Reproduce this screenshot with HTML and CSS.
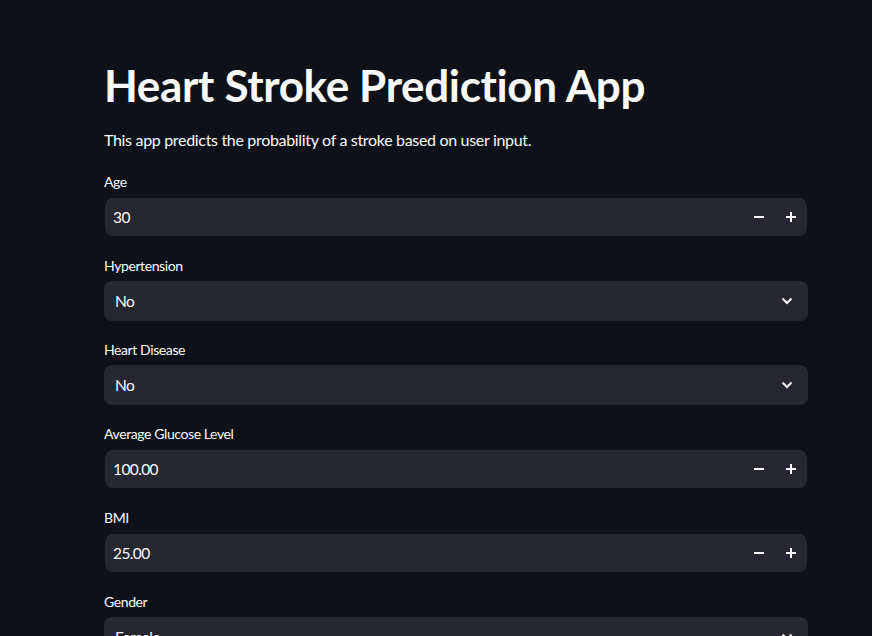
FILE: index.html
```html
<!DOCTYPE html>
<html>
<head>
<meta charset="utf-8">
<link rel="stylesheet" href="styles.css">
</head>
<body>
<main class="main">
  <h1 class="title">Heart Stroke Prediction App</h1>
  <p class="intro">This app predicts the probability of a stroke based on user input.</p>

  <div class="widget">
    <label class="label">Age</label>
    <div class="number">
      <div class="number-inner">
        <span class="value">30</span>
        <button class="step"><svg width="12" height="12" viewBox="0 0 12 12"><rect x="1" y="5" width="10" height="2" fill="#fafafa"/></svg></button>
        <button class="step"><svg width="12" height="12" viewBox="0 0 12 12"><rect x="1" y="5" width="10" height="2" fill="#fafafa"/><rect x="5" y="1" width="2" height="10" fill="#fafafa"/></svg></button>
      </div>
    </div>
  </div>

  <div class="widget">
    <label class="label">Hypertension</label>
    <div class="select">
      <span class="value">No</span>
      <svg class="chev" width="14" height="14" viewBox="0 0 14 14"><path d="M2.5 4.5 L7 9 L11.5 4.5" fill="none" stroke="#fafafa" stroke-width="2"/></svg>
    </div>
  </div>

  <div class="widget">
    <label class="label">Heart Disease</label>
    <div class="select">
      <span class="value">No</span>
      <svg class="chev" width="14" height="14" viewBox="0 0 14 14"><path d="M2.5 4.5 L7 9 L11.5 4.5" fill="none" stroke="#fafafa" stroke-width="2"/></svg>
    </div>
  </div>

  <div class="widget">
    <label class="label">Average Glucose Level</label>
    <div class="number">
      <div class="number-inner">
        <span class="value">100.00</span>
        <button class="step"><svg width="12" height="12" viewBox="0 0 12 12"><rect x="1" y="5" width="10" height="2" fill="#fafafa"/></svg></button>
        <button class="step"><svg width="12" height="12" viewBox="0 0 12 12"><rect x="1" y="5" width="10" height="2" fill="#fafafa"/><rect x="5" y="1" width="2" height="10" fill="#fafafa"/></svg></button>
      </div>
    </div>
  </div>

  <div class="widget">
    <label class="label">BMI</label>
    <div class="number">
      <div class="number-inner">
        <span class="value">25.00</span>
        <button class="step"><svg width="12" height="12" viewBox="0 0 12 12"><rect x="1" y="5" width="10" height="2" fill="#fafafa"/></svg></button>
        <button class="step"><svg width="12" height="12" viewBox="0 0 12 12"><rect x="1" y="5" width="10" height="2" fill="#fafafa"/><rect x="5" y="1" width="2" height="10" fill="#fafafa"/></svg></button>
      </div>
    </div>
  </div>

  <div class="widget">
    <label class="label">Gender</label>
    <div class="select">
      <span class="value">Female</span>
      <svg class="chev" width="14" height="14" viewBox="0 0 14 14"><path d="M2.5 4.5 L7 9 L11.5 4.5" fill="none" stroke="#fafafa" stroke-width="2"/></svg>
    </div>
  </div>
</main>
</body>
</html>
```
FILE: styles.css
```css
html, body {
  margin: 0;
  padding: 0;
  background: #0e1117;
  color: #fafafa;
  font-family: "Lato", "Noto Sans", sans-serif;
  height: 636px;
  overflow: hidden;
}
.main {
  width: 704px;
  margin-left: 104px;
  padding-top: 39px;
  display: flex;
  flex-direction: column;
  gap: 16px;
}
.title {
  margin: 0;
  font-size: 44px;
  font-weight: 700;
  line-height: 52px;
  padding: 20px 0 0 0;
  letter-spacing: -0.35px;
}
.intro {
  margin: 0;
  font-size: 16px;
  line-height: 26px;
  letter-spacing: -0.32px;
}
.widget {
  display: flex;
  flex-direction: column;
}
.label {
  font-size: 14px;
  line-height: 26px;
  height: 26px;
  margin-bottom: 2px;
  letter-spacing: -0.4px;
}
.number {
  height: 40px;
  padding: 1px;
  box-sizing: border-box;
}
.number-inner {
  height: 38px;
  background: #262730;
  border-radius: 8px;
  display: flex;
  align-items: center;
  padding-left: 8px;
}
.value {
  flex: 1;
  font-size: 15.5px;
  letter-spacing: -0.6px;
}
.step {
  width: 32px;
  height: 38px;
  background: none;
  border: none;
  padding: 0;
  display: flex;
  align-items: center;
  justify-content: center;
}
.select {
  height: 40px;
  background: #262730;
  border-radius: 8px;
  display: flex;
  align-items: center;
  padding: 0 8px 0 11px;
}
.chev {
  margin-right: 6px;
}
```
